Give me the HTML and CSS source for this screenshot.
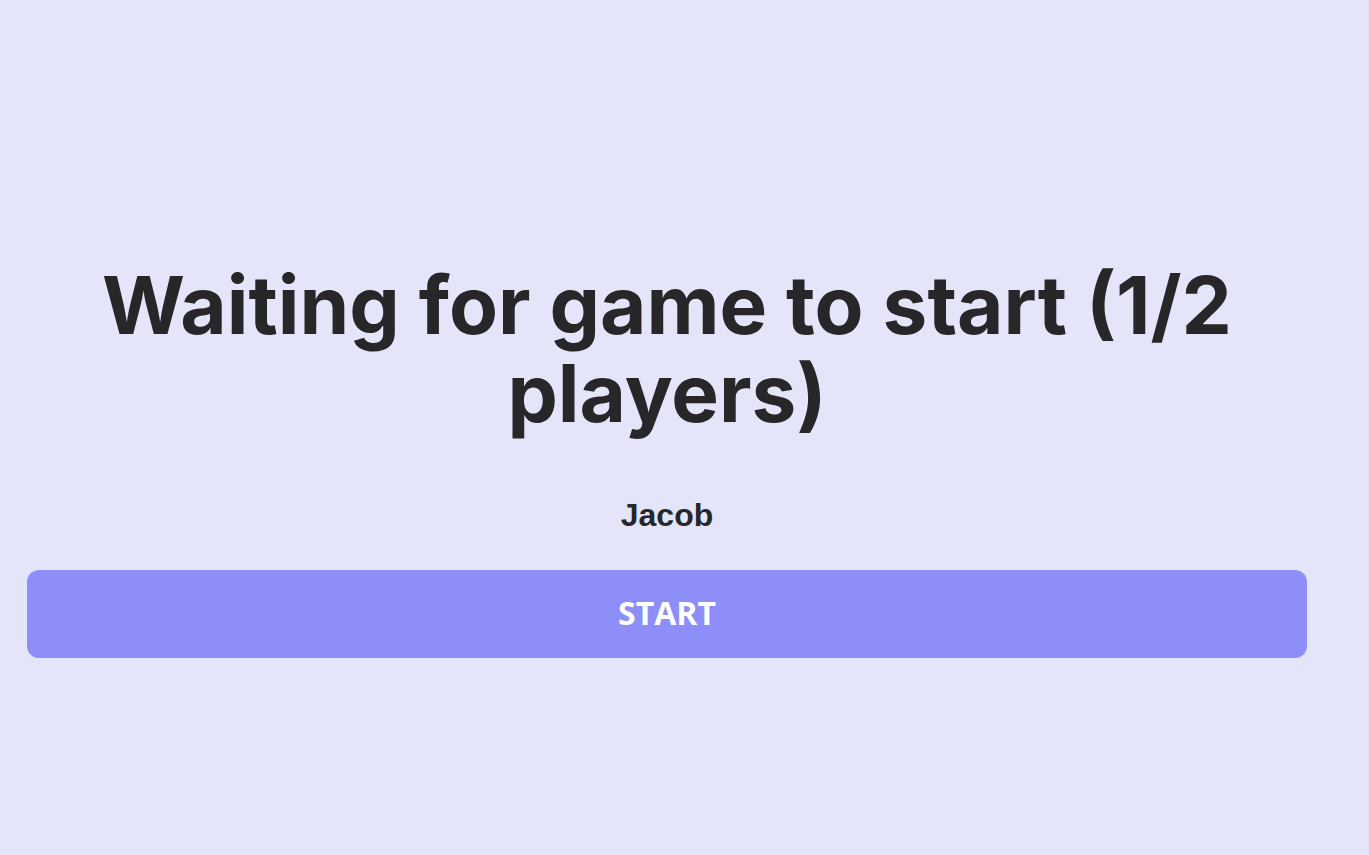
FILE: index.html
```html
<!DOCTYPE html>
<html lang="en">
<head>
<meta charset="utf-8">
<title>Waiting</title>
<link rel="stylesheet" href="styles.css">
</head>
<body>
<main class="lobby">
  <h1 class="lobby-title">Waiting for game to start (1/2 players)</h1>
  <ul class="player-list">
    <li class="player">Jacob</li>
  </ul>
  <button class="start-btn" type="button">START</button>
</main>
</body>
</html>
```
FILE: styles.css
```css
html, body {
  margin: 0;
  padding: 0;
  background: #e4e5f9;
}
body {
  min-height: 855px;
}
.lobby {
  width: 1280px;
  margin-left: 27px;
  padding-top: 261px;
  display: flex;
  flex-direction: column;
  align-items: center;
}
.lobby-title {
  margin: 0;
  padding: 0 60px;
  font-family: Inter, "Liberation Sans", sans-serif;
  font-weight: 700;
  font-size: 80px;
  line-height: 88px;
  color: #27272a;
  text-align: center;
}
.player-list {
  list-style: none;
  margin: 60px 0 0;
  padding: 0;
}
.player {
  font-family: "Liberation Sans", Arial, sans-serif;
  font-weight: 700;
  font-size: 32px;
  line-height: 37px;
  color: #27272a;
  text-align: center;
}
.start-btn {
  margin-top: 36px;
  width: 100%;
  height: 88px;
  padding: 0 0 4px;
  border: none;
  border-radius: 12px;
  background: #8d8ef8;
  color: #ffffff;
  font-family: "Open Sans", sans-serif;
  font-weight: 700;
  font-size: 32px;
  cursor: pointer;
}
```
